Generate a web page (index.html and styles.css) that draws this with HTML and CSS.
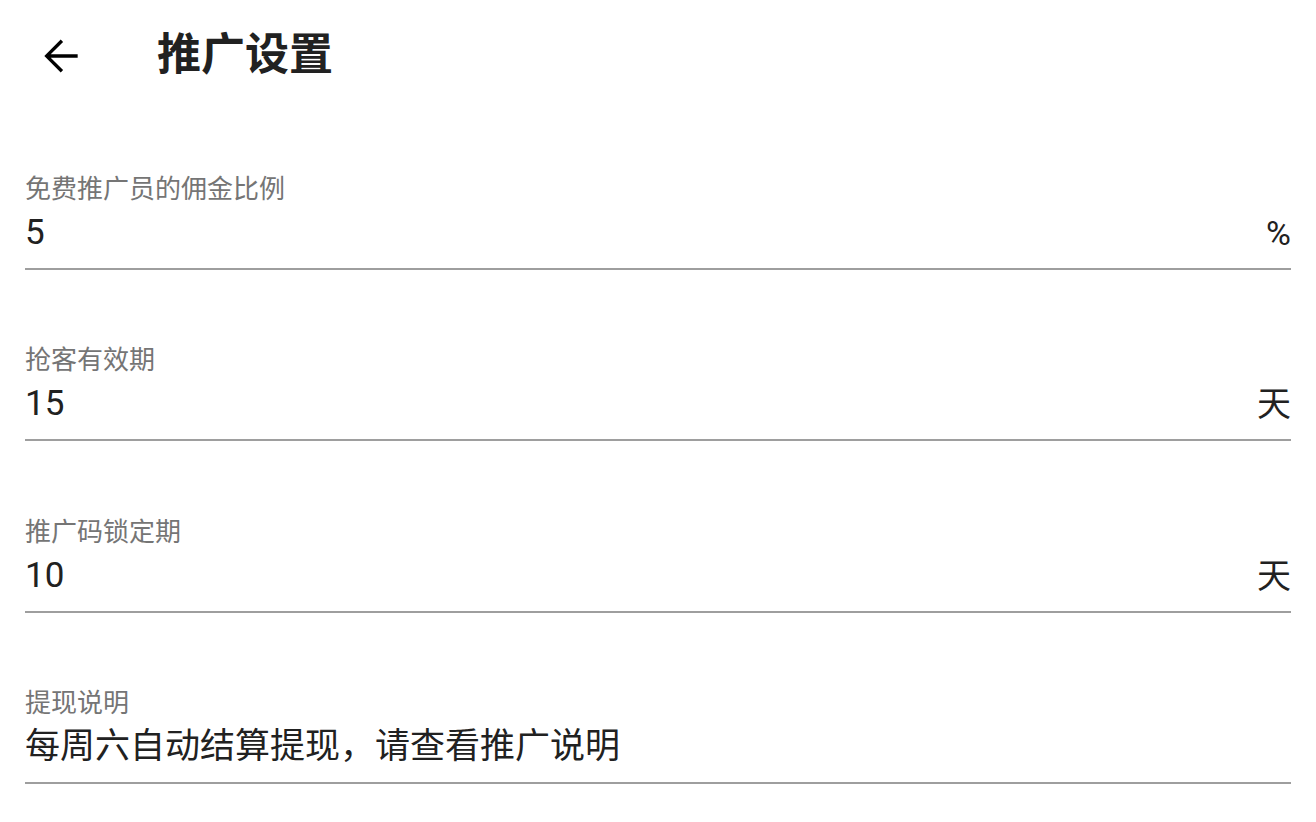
FILE: index.html
```html
<!DOCTYPE html>
<html lang="zh-CN">
<head>
  <meta charset="UTF-8">
  <meta name="viewport" content="width=device-width, initial-scale=1.0">
  <title>推广设置</title>
  <link rel="stylesheet" href="styles.css">
</head>
<body>
  <header>
    <button class="back" aria-label="返回">
      <svg viewBox="0 0 24 24" width="50" height="50">
        <path d="M20 11.2H7.06L13 5.26 11.87 4.13 4 12l7.87 7.87 1.13-1.13L7.06 12.8H20z"/>
      </svg>
    </button>
    <h1>推广设置</h1>
  </header>

  <div class="fields">
    <div class="field">
      <label>免费推广员的佣金比例</label>
      <div class="value-row">
        <span class="value">5</span>
        <span class="suffix">%</span>
      </div>
    </div>

    <div class="field">
      <label>抢客有效期</label>
      <div class="value-row">
        <span class="value">15</span>
        <span class="suffix">天</span>
      </div>
    </div>

    <div class="field">
      <label>推广码锁定期</label>
      <div class="value-row">
        <span class="value">10</span>
        <span class="suffix">天</span>
      </div>
    </div>

    <div class="field">
      <label>提现说明</label>
      <div class="value-row">
        <span class="value">每周六自动结算提现，请查看推广说明</span>
      </div>
    </div>
  </div>
</body>
</html>
```

FILE: styles.css
```css
body {
  font-family: Roboto, "Noto Sans CJK SC", sans-serif;
  margin: 0;
  padding: 0;
  background-color: #fff;
  color: #212121;
}

header {
  height: 110px;
  display: flex;
  align-items: center;
  padding-left: 36px;
}

.back {
  width: 50px;
  height: 50px;
  padding: 0;
  margin-top: 2px;
  border: none;
  background: none;
  display: flex;
}

.back svg {
  fill: #000;
}

header h1 {
  margin: 0 0 8px 71px;
  font-family: "Noto Sans CJK SC", sans-serif;
  font-size: 44px;
  font-weight: 700;
  color: #212121;
}

.fields {
  display: flex;
  flex-direction: column;
  gap: 72.4px;
  padding: 61px 25px 0;
}

.field {
  display: flex;
  flex-direction: column;
  border-bottom: 2px solid #9e9e9e;
  padding-bottom: 13px;
}

.field label {
  font-family: "Noto Sans CJK SC", sans-serif;
  font-size: 26px;
  line-height: 32px;
  color: #757575;
}

.value-row {
  display: flex;
  justify-content: space-between;
  align-items: center;
  margin-top: 8px;
  font-size: 35px;
  line-height: 44px;
}

.suffix {
  font-size: 34px;
}
```
